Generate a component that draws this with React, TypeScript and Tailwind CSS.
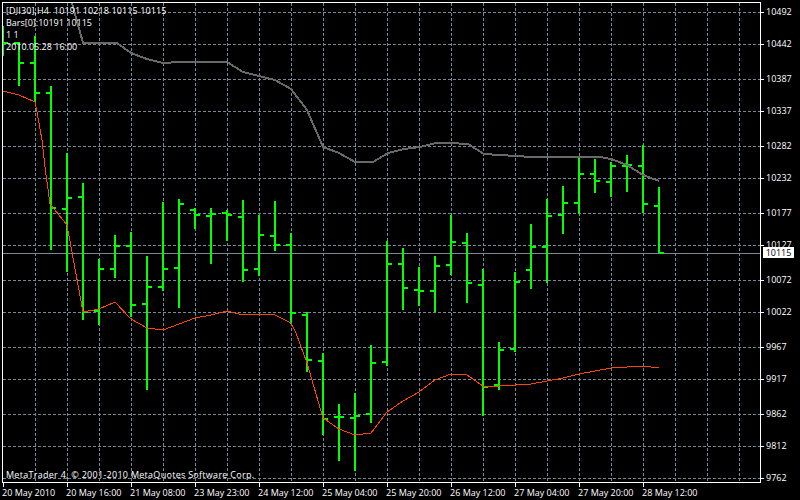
// MT4 style bar chart, all y values are page pixels
const gridX = Array.from({ length: 23 }, (_, i) => 35 + i * 32);
const priceLevels = [
  { label: "10492", y: 12 },
  { label: "10442", y: 44 },
  { label: "10387", y: 79 },
  { label: "10337", y: 111 },
  { label: "10282", y: 146 },
  { label: "10232", y: 178 },
  { label: "10177", y: 213 },
  { label: "10127", y: 245 },
  { label: "10072", y: 280 },
  { label: "10022", y: 312 },
  { label: "9967", y: 347 },
  { label: "9917", y: 379 },
  { label: "9862", y: 414 },
  { label: "9812", y: 446 },
  { label: "9762", y: 478 },
];
const timeLabels = [
  "20 May 2010",
  "20 May 16:00",
  "21 May 08:00",
  "23 May 23:00",
  "24 May 12:00",
  "25 May 04:00",
  "25 May 20:00",
  "26 May 12:00",
  "27 May 04:00",
  "27 May 20:00",
  "28 May 12:00",
];

// high, low, open, close
const bars: [number, number, number, number][] = [
  [26, 56, 43, 43],
  [42, 86, 43, 63],
  [36, 102, 63, 93],
  [86, 250, 93, 208],
  [153, 272, 209, 198],
  [183, 320, 197, 312],
  [259, 325, 311, 269],
  [235, 278, 269, 246],
  [232, 317, 246, 305],
  [256, 390, 304, 287],
  [202, 291, 287, 269],
  [199, 308, 268, 204],
  [208, 229, 210, 215],
  [208, 264, 216, 214],
  [210, 241, 213, 215],
  [200, 282, 217, 270],
  [215, 276, 269, 235],
  [201, 251, 236, 245],
  [233, 324, 245, 313],
  [312, 372, 315, 360],
  [353, 435, 361, 419],
  [404, 461, 417, 417],
  [393, 471, 418, 416],
  [345, 423, 414, 363],
  [241, 366, 362, 264],
  [248, 310, 264, 288],
  [267, 306, 290, 291],
  [256, 312, 291, 266],
  [215, 275, 265, 242],
  [233, 303, 243, 283],
  [269, 416, 285, 387],
  [342, 390, 385, 350],
  [272, 352, 349, 282],
  [224, 289, 270, 247],
  [199, 283, 247, 216],
  [186, 234, 215, 203],
  [158, 214, 203, 174],
  [159, 193, 174, 181],
  [162, 197, 182, 166],
  [155, 192, 166, 165],
  [145, 213, 166, 204],
  [187, 253, 206, 253],
];

const redLine =
  "3,91 19,95 35,102 37,112 42,140 45,167 50,204 67,225 83,312 99,309 115,302 131,319 147,328 163,330 179,324 195,318 211,315 227,311 243,315 259,314 275,315 291,323 296,333 307,363 323,418 339,429 355,435 371,433 387,412 403,401 419,392 435,380 451,374 467,375 483,386 499,386 515,385 531,384 547,381 563,378 579,374 595,371 611,368 627,367 643,366 659,368";
const grayLine =
  "72,3 83,43 117,43 131,53 147,59 163,63 179,62 195,62 227,62 243,72 259,76 275,80 291,89 307,110 323,147 339,153 355,162 373,162 388,153 404,149 420,147 436,143 450,143 468,144 484,154 500,155 515,156 533,157 600,157 611,159 627,165 643,175 659,181";

function Chart() {
  return (
    <svg
      width="757"
      height="479"
      viewBox="3 3 757 479"
      shapeRendering="crispEdges"
      className="block"
    >
      <g stroke="#778899" strokeWidth="1" strokeDasharray="3 2">
        {priceLevels.map((p) => (
          <line key={p.y} x1="3" x2="760" y1={p.y + 0.5} y2={p.y + 0.5} />
        ))}
        {gridX.map((x) => (
          <line key={x} x1={x + 0.5} x2={x + 0.5} y1="3" y2="482" />
        ))}
      </g>
      <line x1="3" x2="760" y1="253.5" y2="253.5" stroke="#778899" />
      <g fill="#00ff00">
        {bars.map(([high, low, open, close], i) => {
          const x = 3 + i * 16;
          return (
            <g key={x}>
              <rect x={x - 1} y={high} width="2" height={low - high} />
              <rect x={x - 5} y={open - 1} width="4" height="2" />
              <rect x={x + 1} y={close - 1} width="4" height="2" />
            </g>
          );
        })}
      </g>
      <polyline points={redLine} fill="none" stroke="#ff4500" strokeWidth="1" />
      <polyline points={grayLine} fill="none" stroke="#696969" strokeWidth="2" />
    </svg>
  );
}

export default function App() {
  return (
    <div className="w-[800px] h-[500px] bg-black text-white overflow-hidden font-['Open_Sans',sans-serif] font-medium text-[9px] leading-[12px]">
      <div className="flex h-[483px]">
        {/* Chart frame */}
        <div className="relative ml-[2px] mt-[2px] w-[759px] h-[481px] border border-white">
          <Chart />
          <div className="absolute left-[3px] top-[2px] whitespace-pre">
            <div className="tracking-[0.12px]">[DJI30],H4  10191 10218 10115 10115</div>
            <div>Bars[0]:10191 10115</div>
            <div>1 1</div>
            <div>2010.05.28 16:00</div>
          </div>
          <div className="absolute left-[3px] top-[466px] whitespace-pre tracking-[0.28px]">
            MetaTrader 4, © 2001-2010 MetaQuotes Software Corp.
          </div>
        </div>

        {/* Price axis */}
        <div className="relative flex-1 flex flex-col pt-[6px]">
          {priceLevels.map((p, i) => {
            const next = priceLevels[i + 1];
            return (
              <div
                key={p.label}
                className="flex shrink-0"
                style={{ height: next ? next.y - p.y : 12 }}
              >
                <div className="w-[3px] h-px mt-[6px] bg-white" />
                <span className="ml-[2px]">{p.label}</span>
              </div>
            );
          })}
          <div className="absolute left-[2px] top-[247px] w-[31px] h-[11px] bg-white text-black text-center leading-[11px]">
            10115
          </div>
        </div>
      </div>

      {/* Time axis */}
      <div className="flex pl-[2px]">
        {timeLabels.map((t) => (
          <div key={t} className="w-[64px] shrink-0">
            <div className="ml-px w-px h-[4px] bg-white" />
            <div className="whitespace-nowrap">{t}</div>
          </div>
        ))}
      </div>
    </div>
  );
}
